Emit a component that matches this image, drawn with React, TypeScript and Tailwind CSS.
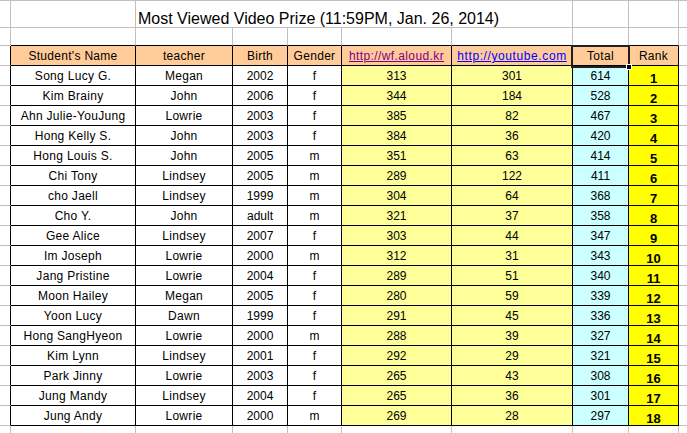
import React from "react";

type Row = [string, string, string, string, number, number, number, number];

const rows: Row[] = [
  ["Song Lucy G.", "Megan", "2002", "f", 313, 301, 614, 1],
  ["Kim Brainy", "John", "2006", "f", 344, 184, 528, 2],
  ["Ahn Julie-YouJung", "Lowrie", "2003", "f", 385, 82, 467, 3],
  ["Hong Kelly S.", "John", "2003", "f", 384, 36, 420, 4],
  ["Hong Louis S.", "John", "2005", "m", 351, 63, 414, 5],
  ["Chi Tony", "Lindsey", "2005", "m", 289, 122, 411, 6],
  ["cho Jaell", "Lindsey", "1999", "m", 304, 64, 368, 7],
  ["Cho Y.", "John", "adult", "m", 321, 37, 358, 8],
  ["Gee Alice", "Lindsey", "2007", "f", 303, 44, 347, 9],
  ["Im Joseph", "Lowrie", "2000", "m", 312, 31, 343, 10],
  ["Jang Pristine", "Lowrie", "2004", "f", 289, 51, 340, 11],
  ["Moon Hailey", "Megan", "2005", "f", 280, 59, 339, 12],
  ["Yoon Lucy", "Dawn", "1999", "f", 291, 45, 336, 13],
  ["Hong SangHyeon", "Lowrie", "2000", "m", 288, 39, 327, 14],
  ["Kim Lynn", "Lindsey", "2001", "f", 292, 29, 321, 15],
  ["Park Jinny", "Lowrie", "2003", "f", 265, 43, 308, 16],
  ["Jung Mandy", "Lindsey", "2004", "f", 265, 36, 301, 17],
  ["Jung Andy", "Lowrie", "2000", "m", 269, 28, 297, 18],
];

const W = [
  "w-[11px]",
  "w-[125px]",
  "w-[97px]",
  "w-[55px]",
  "w-[54px]",
  "w-[110px]",
  "w-[121px]",
  "w-[56px]",
  "w-[50px]",
];

const tableCell =
  "shrink-0 box-border border-r border-b border-black flex items-end justify-center leading-none pb-[3px] whitespace-nowrap";

function GridRow({ h, bottomBlack }: { h: string; bottomBlack?: boolean }) {
  return (
    <div className={`flex ${h}`}>
      <div className={`${W[0]} shrink-0 box-border border-r border-b border-[#c0c0c0]`} />
      {W.slice(1).map((w, i) => (
        <div
          key={i}
          className={`${w} shrink-0 box-border border-r border-b border-r-[#c0c0c0] ${
            bottomBlack ? "border-b-black" : "border-b-[#c0c0c0]"
          }`}
        />
      ))}
      <div className="flex-1 box-border border-b border-[#c0c0c0]" />
    </div>
  );
}

export default function App() {
  return (
    <div
      className="relative w-[687px] h-[433px] overflow-hidden bg-white text-black border-t border-[#c0c0c0]"
      style={{ fontFamily: '"Liberation Sans", Arial, sans-serif' }}
    >
      {/* Title row */}
      <div className="flex h-[27px]">
        <div className={`${W[0]} shrink-0 box-border border-r border-b border-[#c0c0c0]`} />
        <div className={`${W[1]} shrink-0 box-border border-r border-b border-[#c0c0c0]`} />
        <div className="w-[437px] shrink-0 box-border border-r border-b border-[#c0c0c0] flex items-end pl-[2px] text-[16px] leading-none whitespace-nowrap">
          Most Viewed Video Prize (11:59PM, Jan. 26, 2014)
        </div>
        <div className={`${W[7]} shrink-0 box-border border-r border-b border-[#c0c0c0]`} />
        <div className={`${W[8]} shrink-0 box-border border-r border-b border-[#c0c0c0]`} />
        <div className="flex-1 box-border border-b border-[#c0c0c0]" />
      </div>

      {/* Empty row */}
      <GridRow h="h-[18px]" bottomBlack />

      {/* Header row */}
      <div className="flex h-[20px] text-[12px] tracking-[0.3px]">
        <div className={`${W[0]} shrink-0 box-border border-r border-b border-r-black border-b-[#c0c0c0]`} />
        <div className={`${W[1]} ${tableCell} bg-[#ffcc99]`}>Student's Name</div>
        <div className={`${W[2]} ${tableCell} bg-[#ffcc99]`}>teacher</div>
        <div className={`${W[3]} ${tableCell} bg-[#ffcc99]`}>Birth</div>
        <div className={`${W[4]} ${tableCell} bg-[#ffcc99]`}>Gender</div>
        <div className={`${W[5]} ${tableCell} bg-[#ffcc99]`}>
          <span className="text-[#800080] underline underline-offset-[1px] tracking-[0.4px]">http://wf.aloud.kr</span>
        </div>
        <div className={`${W[6]} ${tableCell} bg-[#ffcc99]`}>
          <span className="text-[#0000ff] underline underline-offset-[1px] tracking-[0.6px]">http://youtube.com</span>
        </div>
        <div className={`${W[7]} ${tableCell} bg-[#ffcc99]`}>Total</div>
        <div className={`${W[8]} ${tableCell} bg-[#ffcc99]`}>Rank</div>
        <div className="flex-1 box-border border-b border-[#c0c0c0]" />
      </div>

      {/* Data rows */}
      {rows.map((r, idx) => (
        <div key={idx} className="flex h-[20px] text-[12px]">
          <div className={`${W[0]} shrink-0 box-border border-r border-b border-r-black border-b-[#c0c0c0]`} />
          <div className={`${W[1]} ${tableCell} bg-white tracking-[0.3px]`}>{r[0]}</div>
          <div className={`${W[2]} ${tableCell} bg-white tracking-[0.3px]`}>{r[1]}</div>
          <div className={`${W[3]} ${tableCell} bg-white`}>{r[2]}</div>
          <div className={`${W[4]} ${tableCell} bg-white`}>{r[3]}</div>
          <div className={`${W[5]} ${tableCell} bg-[#ffff99]`}>{r[4]}</div>
          <div className={`${W[6]} ${tableCell} bg-[#ffff99]`}>{r[5]}</div>
          <div className={`${W[7]} ${tableCell} bg-[#ccffff]`}>{r[6]}</div>
          <div
            className={`${W[8]} shrink-0 box-border border-r border-b border-black flex items-end justify-center leading-none pb-0 bg-[#ffff00] font-bold text-[13px]`}
          >
            {r[7]}
          </div>
          <div className="flex-1 box-border border-b border-[#c0c0c0]" />
        </div>
      ))}

      {/* Trailing row */}
      <GridRow h="h-[20px]" />

      {/* Selection on Total header */}
      <div className="absolute left-[571px] top-[44px] w-[59px] h-[23px] border-2 border-[#202020] pointer-events-none" />
      <div className="absolute left-[626px] top-[63px] w-[6px] h-[6px] bg-black border border-white pointer-events-none" />
    </div>
  );
}
